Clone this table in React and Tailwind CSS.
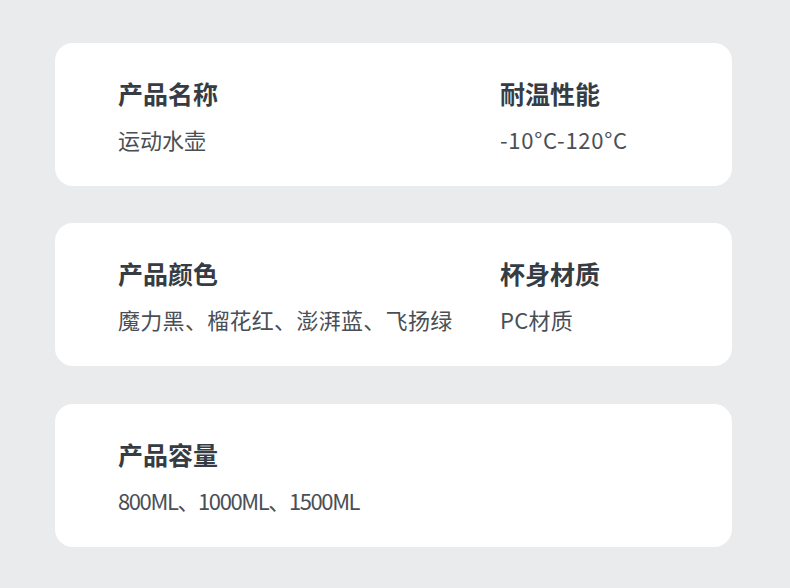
export default function App() {
  const font = { fontFamily: '"Noto Sans CJK SC", "Noto Sans", sans-serif' };
  const cards = [
    [["产品名称", "运动水壶", ""], ["耐温性能", "-10°C-120°C", "tracking-[0.7px]"]],
    [["产品颜色", "魔力黑、榴花红、澎湃蓝、飞扬绿", "tracking-[0.3px]"], ["杯身材质", "PC材质", "tracking-[0.3px]"]],
    [["产品容量", "800ML、1000ML、1500ML", "tracking-[-1.4px]"]],
  ];
  return (
    <div className="w-[790px] h-[588px] bg-[#eaebed] pt-[43px] pl-[55px] flex flex-col gap-[37px]" style={font}>
      {cards.map((cols, i) => (
        <div key={i} className={(i === 2 ? "mt-[1px] " : "") + "w-[677px] h-[143px] bg-white rounded-[18px] pl-[63px] pt-[38px] flex"}>
          {cols.map(([label, value, tr], j) => (
            <div key={j} className={j === 0 ? "w-[382px] flex flex-col" : "flex flex-col"}>
              <div className="text-[25px] leading-[25px] font-bold text-[#363c44]">{label}</div>
              <div className={"mt-[22px] text-[22px] leading-[22px] text-[#4a4f56] " + tr}>{value}</div>
            </div>
          ))}
        </div>
      ))}
    </div>
  );
}
